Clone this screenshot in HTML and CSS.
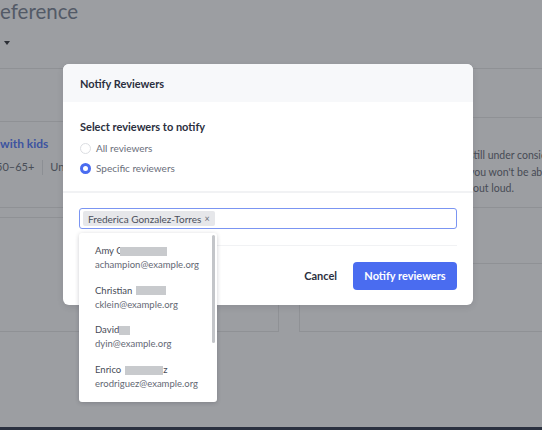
FILE: index.html
```html
<!DOCTYPE html>
<html lang="en">
<head>
<meta charset="utf-8">
<title>Notify Reviewers</title>
<link rel="stylesheet" href="styles.css">
</head>
<body>
<div class="page">
  <header class="page-head">
    <h1 class="page-title">eference</h1>
    <div class="page-sort"><span class="caret"></span></div>
  </header>
  <section class="summary">
    <div class="summary-left">
      <div class="band band-left"></div>
      <div class="summary-left-body">
        <div class="group-name">with kids</div>
        <div class="group-meta"><span class="meta-age">50–65+</span><span class="meta-sep"></span><span>Uni</span></div>
      </div>
    </div>
    <div class="summary-right">
      <div class="band band-right"></div>
      <div class="summary-right-body">
        <div class="note-line">still under consideration</div>
        <div class="note-line">you won't be able to</div>
        <div class="note-line note-last">out loud.</div>
      </div>
    </div>
  </section>
  <section class="cards">
    <div class="card card-left"></div>
    <div class="card card-right"><div class="card-right-top"></div></div>
  </section>
  <div class="spacer"></div>
  <div class="bottom-strip"></div>
</div>

<div class="modal">
  <div class="modal-head">Notify Reviewers</div>
  <div class="modal-choice">
    <div class="choice-title">Select reviewers to notify</div>
    <label class="radio-row"><span class="radio"></span>All reviewers</label>
    <label class="radio-row"><span class="radio radio-on"></span>Specific reviewers</label>
  </div>
  <div class="modal-picker">
    <div class="picker-field">
      <div class="input-box">
        <span class="tag">Frederica Gonzalez-Torres <span class="tag-x">×</span></span>
      </div>
      <div class="dropdown">
        <div class="dd-list">
          <div class="dd-item">
            <div class="dd-name">Amy C<span class="redact redact-amy"></span></div>
            <div class="dd-email">achampion@example.org</div>
          </div>
          <div class="dd-item">
            <div class="dd-name">Christian<span class="redact redact-chris"></span></div>
            <div class="dd-email">cklein@example.org</div>
          </div>
          <div class="dd-item">
            <div class="dd-name">David<span class="redact redact-david"></span></div>
            <div class="dd-email">dyin@example.org</div>
          </div>
          <div class="dd-item">
            <div class="dd-name">Enrico<span class="redact redact-enrico"></span>z</div>
            <div class="dd-email">erodriguez@example.org</div>
          </div>
        </div>
        <div class="dd-scroll"></div>
      </div>
    </div>
  </div>
  <div class="modal-foot">
    <button class="btn-cancel">Cancel</button>
    <button class="btn-primary">Notify reviewers</button>
  </div>
</div>
</body>
</html>
```
FILE: styles.css
```css
* { box-sizing: border-box; }
html, body { margin: 0; padding: 0; }
body {
  width: 542px;
  height: 430px;
  overflow: hidden;
  background: #9c9ea2;
  font-family: "Lato", "Liberation Sans", sans-serif;
  position: relative;
}
.page {
  height: 430px;
  display: flex;
  flex-direction: column;
}
.page-head {
  height: 69px;
  border-bottom: 1px solid #8f9195;
  flex: none;
}
.page-title {
  margin: 0;
  font-weight: 400;
  font-size: 20.5px;
  line-height: 22px;
  padding-top: 0;
  color: #535a67;
  white-space: nowrap;
}
.page-sort {
  margin-top: 19px;
  padding-left: 4px;
  height: 6px;
}
.caret {
  display: block;
  width: 0;
  height: 0;
  border-left: 3px solid transparent;
  border-right: 3px solid transparent;
  border-top: 4px solid #2c2f36;
}
.summary {
  display: grid;
  grid-template-columns: 300px 1fr;
  border-bottom: 1px solid #8f9195;
  height: 139px;
  flex: none;
}
.band { border-bottom: 1px solid #8f9195; }
.band-left { height: 53px; }
.band-right { height: 49px; }
.summary-left-body { padding-top: 14px; }
.group-name {
  font-weight: 700;
  font-size: 12px;
  line-height: 16px;
  color: #3d54a0;
  white-space: nowrap;
}
.group-meta {
  margin-top: 7px;
  margin-left: -4px;
  display: flex;
  align-items: center;
  font-size: 11px;
  line-height: 16px;
  color: #484d57;
  white-space: nowrap;
}
.meta-sep {
  width: 1px;
  height: 15px;
  background: #8c8f94;
  margin: 0 7px 0 8px;
}
.summary-right-body {
  padding: 29px 0 0 169px;
}
.note-line {
  font-size: 10.5px;
  line-height: 16.5px;
  color: #474b55;
  white-space: nowrap;
}
.note-last { padding-left: 4px; }
.cards {
  display: grid;
  grid-template-columns: 279px 1fr;
  column-gap: 20px;
  padding-top: 9px;
  height: 124px;
  flex: none;
}
.card {
  border: 1px solid #8f9195;
  border-left: none;
}
.card-left { margin-left: -2px; border-left: 1px solid #8f9195; }
.card-right { border-right: none; border-top: none; border-left: 1px solid #8f9195; }
.card-right-top {
  height: 47px;
  border-bottom: 1px solid #8f9195;
}
.spacer { flex: 1; }
.bottom-strip {
  height: 3px;
  background: #2b3140;
  flex: none;
}

/* modal */
.modal {
  position: absolute;
  left: 63px;
  top: 64px;
  width: 410px;
  height: 241px;
  background: #ffffff;
  border-radius: 6px;
  box-shadow: 0 2px 6px rgba(40, 44, 56, 0.12);
  display: flex;
  flex-direction: column;
}
.modal-head {
  height: 38px;
  background: #f7f8fa;
  border-radius: 6px 6px 0 0;
  display: flex;
  align-items: center;
  padding: 0 17px;
  font-weight: 700;
  font-size: 11px;
  color: #2b2f3e;
}
.modal-choice {
  padding: 18px 17px 13px;
  border-bottom: 2px solid #f1f2f4;
}
.choice-title {
  font-weight: 700;
  font-size: 11px;
  line-height: 14px;
  color: #2b2f3e;
  margin-bottom: 4px;
}
.radio-row {
  display: flex;
  align-items: center;
  height: 20px;
  font-size: 10px;
  color: #6a6e7a;
}
.radio {
  width: 11px;
  height: 11px;
  border-radius: 50%;
  border: 1px solid #dcdee2;
  background: #fff;
  margin-right: 5px;
  flex: none;
}
.radio-on {
  border: 3px solid #4a6cf0;
}
.modal-picker {
  padding: 15px 16px 0 16px;
}
.picker-field {
  position: relative;
  padding-bottom: 16px;
  border-bottom: 1px solid #f1f2f4;
}
.input-box {
  height: 21px;
  border: 1px solid #7b95f2;
  border-radius: 3px;
  padding: 2px 3px;
  display: flex;
  align-items: center;
}
.tag {
  display: inline-flex;
  align-items: center;
  height: 15px;
  padding: 0 5px 0 5px;
  background: #e6e7ea;
  border-radius: 2px;
  font-size: 10px;
  color: #4b4f5b;
  white-space: nowrap;
}
.tag-x {
  margin-left: 3px;
  font-size: 9px;
  color: #6a6e78;
}
.dropdown {
  position: absolute;
  left: 0;
  top: 25px;
  width: 138px;
  height: 169px;
  background: #ffffff;
  border-radius: 3px;
  box-shadow: 0 1px 4px rgba(30, 34, 46, 0.22);
  overflow: hidden;
  z-index: 2;
}
.dd-list { padding: 11px 16px 0 16px; }
.dd-item { height: 39.7px; }
.dd-name, .dd-email {
  font-size: 9.5px;
  line-height: 14px;
  white-space: nowrap;
}
.dd-name { color: #474b57; display: flex; align-items: center; }
.dd-email { color: #646874; }
.redact {
  display: inline-block;
  height: 9px;
  background: #c8cacd;
  filter: blur(0.4px);
}
.redact-amy { width: 47px; margin-left: -3px; }
.redact-chris { width: 30px; margin-left: 4px; }
.redact-david { width: 11px; }
.redact-enrico { width: 38px; margin-left: 4px; }
.dd-scroll {
  position: absolute;
  right: 2px;
  top: 2px;
  width: 3px;
  height: 108px;
  border-radius: 2px;
  background: #c3c5c9;
}
.modal-foot {
  flex: 1;
  display: flex;
  align-items: center;
  justify-content: flex-end;
  padding: 0 16px 0 17px;
  gap: 16px;
}
.btn-cancel {
  border: none;
  background: none;
  padding: 0;
  font-family: inherit;
  font-weight: 700;
  font-size: 11px;
  color: #2b2f3e;
}
.btn-primary {
  width: 104px;
  height: 28px;
  border: none;
  border-radius: 4px;
  background: #4a6cf0;
  color: #ffffff;
  font-family: inherit;
  font-weight: 700;
  font-size: 11px;
}
```
